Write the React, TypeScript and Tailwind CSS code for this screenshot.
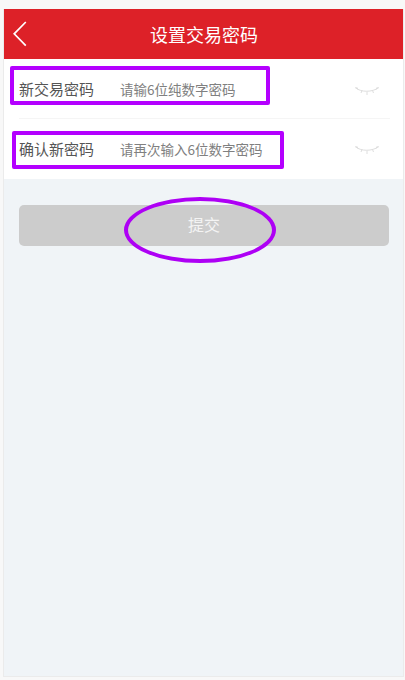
function BackArrow() {
  return (
    <svg className="absolute left-[9px] top-[12px]" width="14" height="26" viewBox="0 0 14 26" fill="none" stroke="#fff" strokeWidth="1.7">
      <path d="M12.8 1L1.2 12.8 12.8 24.6" />
    </svg>
  );
}

function EyeClosed() {
  return (
    <svg width="26" height="10" viewBox="0 0 26 10" fill="none" stroke="#dedede" strokeWidth="1">
      <path d="M1 1.5C7 6.5 18 6.5 25 1.5" />
      <path d="M2.5 1l2 3M8 4.5l-1 2.5M13 5.5V9M18.5 4.5l1 2.5M23.5 1l-2 3" />
    </svg>
  );
}

function PasswordRow({ label, placeholder, height }: { label: string; placeholder: string; height: string }) {
  return (
    <div className={`flex items-center justify-between ${height}`}>
      <div className="flex items-center">
        <span className="w-[101px] text-[15px] text-[#555]">{label}</span>
        <span className="text-[13.5px] text-[#808080]">{placeholder}</span>
      </div>
      <div className="mr-[10px] mt-[2px]">
        <EyeClosed />
      </div>
    </div>
  );
}

export default function App() {
  return (
    <div className="relative h-[680px] w-[405px] overflow-hidden bg-[#f8f8f8] pb-[3px] pl-[3px] pr-[1px] pt-[9px] font-['Noto_Sans_CJK_SC',sans-serif]">
      <div className="flex h-full flex-col border-x border-b border-[#ebebeb] bg-[#f0f4f7]">
        <header className="relative flex h-[50px] items-center justify-center bg-[#dd2128]">
          <BackArrow />
          <h1 className="pl-[1px] text-[18px] text-white">设置交易密码</h1>
        </header>

        <div className="bg-white pl-[15px] pr-[13px]">
          <div className="border-b border-[#f5f5f5]">
            <PasswordRow height="h-[59px] pt-[2px]" label="新交易密码" placeholder="请输6位纯数字密码" />
          </div>
          <PasswordRow height="h-[60px]" label="确认新密码" placeholder="请再次输入6位数字密码" />
        </div>

        <div className="pl-[15px] pt-[26px]">
          <button className="h-[41px] w-[370px] rounded-[5px] bg-[#cccccc] pb-[3px] text-[16px] text-[#f4f4f4]">提交</button>
        </div>
      </div>

      {/* pen annotations on top of the screenshot */}
      <div className="absolute left-[10px] top-[66px] h-[39px] w-[260px] rounded-[2px] border-4 border-[#b400ff]" />
      <div className="absolute left-[12px] top-[131px] h-[38px] w-[272px] rounded-[2px] border-4 border-[#b400ff]" />
      <div className="absolute left-[124px] top-[197px] h-[66px] w-[152px] rounded-[50%] border-4 border-[#ae00f5]" />
    </div>
  );
}
